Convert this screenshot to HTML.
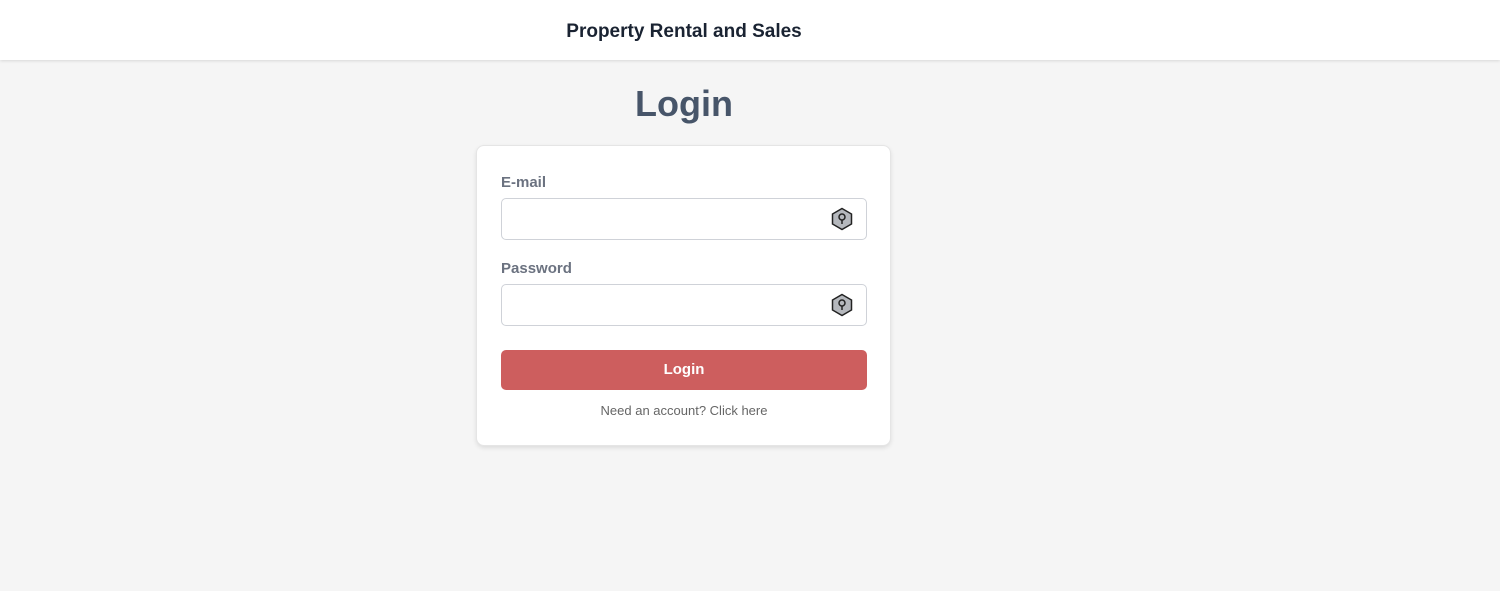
<!DOCTYPE html>
<html><head><style>
*{box-sizing:border-box;margin:0;padding:0}
body{width:1500px;height:591px;background:#f5f5f5;font-family:"Liberation Sans",sans-serif;position:relative;overflow:hidden}
.hdr{position:absolute;left:0;top:0;width:1500px;height:60px;background:#fff;box-shadow:0 1px 3px rgba(0,0,0,.12)}
.hdr div{position:absolute;left:0;width:1368px;top:21px;text-align:center;font-size:19px;font-weight:bold;color:#1a2332}
h1{position:absolute;left:477px;width:414px;top:83px;text-align:center;font-size:36px;font-weight:bold;color:#475569}
.card{position:absolute;left:476px;top:145px;width:415px;height:301px;background:#fff;border-radius:8px;border:1px solid #e5e5e5;box-shadow:0 2px 4px rgba(0,0,0,.1)}
label{position:absolute;left:24px;font-size:15px;font-weight:bold;color:#6b7280}
.in{position:absolute;left:24px;width:366px;height:42px;border:1px solid #cfd2d8;border-radius:5px}
.in svg{position:absolute;right:12px;top:8px}
.btn{position:absolute;left:24px;top:204px;width:366px;height:40px;background:#cd5e5e;border-radius:5px;color:#fff;font-size:15px;font-weight:bold;text-align:center;line-height:40px}
.lnk{position:absolute;left:0;width:414px;top:257px;text-align:center;font-size:13px;color:#666}
</style></head><body>
<div class="hdr"><div>Property Rental and Sales</div></div>
<h1>Login</h1>
<div class="card">
<label style="top:28px">E-mail</label>
<div class="in" style="top:52px"><svg width="24" height="24" viewBox="0 0 24 24"><path d="M12 1.5L21.5 7v10L12 22.5 2.5 17V7z" fill="#b5b8bd" stroke="#222" stroke-width="1.5"/><circle cx="12" cy="10" r="3" fill="none" stroke="#222" stroke-width="1.5"/><path d="M12 13v4" stroke="#222" stroke-width="1.5"/></svg></div>
<label style="top:114px">Password</label>
<div class="in" style="top:138px"><svg width="24" height="24" viewBox="0 0 24 24"><path d="M12 1.5L21.5 7v10L12 22.5 2.5 17V7z" fill="#b5b8bd" stroke="#222" stroke-width="1.5"/><circle cx="12" cy="10" r="3" fill="none" stroke="#222" stroke-width="1.5"/><path d="M12 13v4" stroke="#222" stroke-width="1.5"/></svg></div>
<div class="btn">Login</div>
<div class="lnk">Need an account? Click here</div>
</div>
</body></html>
